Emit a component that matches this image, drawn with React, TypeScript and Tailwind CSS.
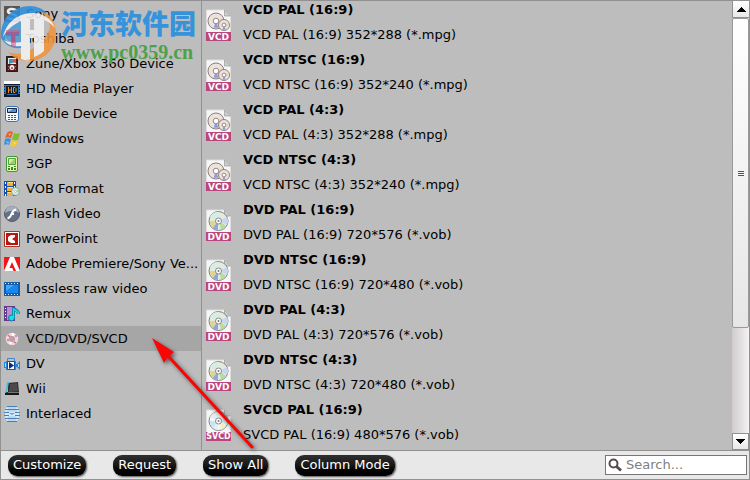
import type { ReactNode } from "react";

interface Category {
  label: string;
  icon: ReactNode;
}

interface Profile {
  kind: "VCD" | "DVD" | "SVCD";
  title: string;
  detail: string;
}

const categories: readonly Category[] = [
  { label: "Sony", icon: <SonyIcon /> },
  { label: "Toshiba", icon: <ToshibaIcon /> },
  { label: "Zune/Xbox 360 Device", icon: <ZuneIcon /> },
  { label: "HD Media Player", icon: <HdIcon /> },
  { label: "Mobile Device", icon: <MobileIcon /> },
  { label: "Windows", icon: <WindowsIcon /> },
  { label: "3GP", icon: <ThreeGpIcon /> },
  { label: "VOB Format", icon: <VobIcon /> },
  { label: "Flash Video", icon: <FlashIcon /> },
  { label: "PowerPoint", icon: <PowerPointIcon /> },
  { label: "Adobe Premiere/Sony Ve...", icon: <AdobeIcon /> },
  { label: "Lossless raw video", icon: <FilmIcon /> },
  { label: "Remux", icon: <RemuxIcon /> },
  { label: "VCD/DVD/SVCD", icon: <DiscIcon /> },
  { label: "DV", icon: <DvIcon /> },
  { label: "Wii", icon: <WiiIcon /> },
  { label: "Interlaced", icon: <InterlacedIcon /> },
];

const profiles: readonly Profile[] = [
  { kind: "VCD", title: "VCD PAL (16:9)", detail: "VCD PAL (16:9) 352*288 (*.mpg)" },
  { kind: "VCD", title: "VCD NTSC (16:9)", detail: "VCD NTSC (16:9) 352*240 (*.mpg)" },
  { kind: "VCD", title: "VCD PAL (4:3)", detail: "VCD PAL (4:3) 352*288 (*.mpg)" },
  { kind: "VCD", title: "VCD NTSC (4:3)", detail: "VCD NTSC (4:3) 352*240 (*.mpg)" },
  { kind: "DVD", title: "DVD PAL (16:9)", detail: "DVD PAL (16:9) 720*576 (*.vob)" },
  { kind: "DVD", title: "DVD NTSC (16:9)", detail: "DVD NTSC (16:9) 720*480 (*.vob)" },
  { kind: "DVD", title: "DVD PAL (4:3)", detail: "DVD PAL (4:3) 720*576 (*.vob)" },
  { kind: "DVD", title: "DVD NTSC (4:3)", detail: "DVD NTSC (4:3) 720*480 (*.vob)" },
  { kind: "SVCD", title: "SVCD PAL (16:9)", detail: "SVCD PAL (16:9) 480*576 (*.vob)" },
];

const selectedCategory = "VCD/DVD/SVCD";

export default function App() {
  return (
    <main className="relative flex h-screen flex-col overflow-hidden border border-[#919191] bg-[#bdbdbd] font-['Verdana','DejaVu_Sans',sans-serif] text-[13px] text-black">
      <div className="flex min-h-0 flex-1">
        <CategoryList />
        <ProfileList />
        <Scrollbar />
      </div>
      <Toolbar />
      <Watermark />
      <Pointer />
    </main>
  );
}

function CategoryList() {
  return (
    <nav
      aria-label="Format categories"
      className="w-[201px] shrink-0 overflow-hidden border-r border-[#919191]"
    >
      {categories.map(({ label, icon }) => (
        <button
          aria-current={label === selectedCategory}
          className={`flex h-[25px] w-full items-center gap-1.5 pl-[3px] text-left whitespace-nowrap ${
            label === selectedCategory ? "bg-[#a6a6a6]" : ""
          }`}
          key={label}
          type="button"
        >
          {icon}
          <span>{label}</span>
        </button>
      ))}
    </nav>
  );
}

function ProfileList() {
  return (
    <ul className="min-w-0 flex-1 overflow-hidden pl-1">
      {profiles.map((profile) => (
        <li className="-mt-1 mb-1 flex h-[50px] gap-3" key={profile.title}>
          <div className="pt-3">
            <ProfileIcon kind={profile.kind} />
          </div>
          <div className="leading-[25px]">
            <div className="font-bold">{profile.title}</div>
            <div>{profile.detail}</div>
          </div>
        </li>
      ))}
    </ul>
  );
}

function Scrollbar() {
  return (
    <div className="flex w-[17px] shrink-0 flex-col bg-linear-to-r from-[#d0cccd] to-[#f4f2f3]">
      <button
        aria-label="Scroll up"
        className="flex h-[17px] shrink-0 items-center justify-center border-b border-l border-[#919191] bg-linear-to-b from-white to-[#e8e8e8]"
        type="button"
      >
        <svg width="9" height="5" viewBox="0 0 9 5" shapeRendering="crispEdges">
          <path d="M4 0h1v1h1v1h1v1h1v1h1v1H0V4h1V3h1V2h1V1h1z" />
        </svg>
      </button>
      <div className="flex h-[310px] items-center justify-center rounded-xs border border-[#999] bg-linear-to-b from-white to-[#e6e6e6]">
        <div className="flex w-1.5 flex-col gap-px">
          <span className="h-px bg-[#555]" />
          <span className="h-px bg-[#555]" />
          <span className="h-px bg-[#555]" />
        </div>
      </div>
      <button
        aria-label="Scroll down"
        className="mt-auto flex h-[17px] shrink-0 items-center justify-center border border-[#919191] bg-linear-to-b from-white to-[#e8e8e8]"
        type="button"
      >
        <svg width="9" height="5" viewBox="0 0 9 5" shapeRendering="crispEdges">
          <path d="M0 0h9v1H8v1H7v1H6v1H5v1H4V4H3V3H2V2H1V1H0z" />
        </svg>
      </button>
    </div>
  );
}

function Toolbar() {
  return (
    <footer className="flex h-[29px] shrink-0 items-center justify-between border-t border-[#919191] bg-[#e8e8e8] pr-0.5 pl-[7px]">
      <div className="flex gap-[27px]">
        <ToolbarButton>Customize</ToolbarButton>
        <ToolbarButton>Request</ToolbarButton>
        <ToolbarButton>Show All</ToolbarButton>
        <ToolbarButton>Column Mode</ToolbarButton>
      </div>
      <label className="flex h-5 w-[142px] items-center gap-1 border border-[#777] bg-white px-0.5">
        <svg className="shrink-0" width="14" height="14" viewBox="0 0 14 14" fill="none" stroke="#584a4c">
          <circle cx="5.500" cy="5.500" r="4" strokeWidth="2" />
          <path d="M8.500 8.500l4.500 4" strokeWidth="3" />
        </svg>
        <input
          aria-label="Search"
          className="w-full min-w-0 bg-transparent outline-none placeholder:text-[#808080]"
          placeholder="Search..."
          type="text"
        />
      </label>
    </footer>
  );
}

function ToolbarButton({ children }: { children: string }) {
  return (
    <button
      className="h-[21px] rounded-[9px] bg-linear-to-b from-[#303030] via-[#171717] to-black px-[5px] leading-5 whitespace-nowrap text-white shadow-[1px_1px_2px_#555]"
      type="button"
    >
      {children}
    </button>
  );
}

// Site mark laid over the first rows of the category list
function Watermark() {
  return (
    <div aria-hidden="true" className="pointer-events-none absolute top-1 left-0 flex gap-1">
      <svg width="56" height="58" viewBox="0 0 56 58" opacity="0.88">
        <path d="M38 4c11 4 17 13 17 24 0 16-12 28-27 28-9 0-16-3-21-9 8 3 17 2 24-3 10-6 17-14 18-23-2-7-6-12-11-17z" fill="#f0953c" />
        <path d="M0 33C-1 15 11 1 29 1c7 0 13 3 17 7-9-2-18 0-24 6C12 18 5 25 4 34c5 5 10 6 16 6v3C11 44 4 40 0 33z" fill="#2d8fdc" />
        <path d="M4 33c2-8 8-14 17-18v23c-7 1-13-1-17-5z" fill="#2d8fdc" opacity=".75" />
        <path d="M2 32C5 17 18 8 31 8c11 0 20 6 23 15-6-7-13-10-22-9C19 14 8 21 2 32z" fill="#f3f3f3" />
        <path d="M20 15l9-2v12h4V12l10 3v31c-3 3-7 5-10 6V33h-4v22c-3 1-6 0-9-1V41C13 42 6 40 3 35c5 3 11 3 17 2z" fill="#f3f3f3" />
        <path d="M5 25h14v4h-4v13h-5V29H5z" fill="#d9446a" opacity="0.5" />
      </svg>
      <div className="font-bold">
        <div className="font-['Noto_Sans_CJK_SC',sans-serif] text-[27px] leading-9 font-black text-[#3693da]">
          河东软件园
        </div>
        <div className="font-['Liberation_Serif',serif] text-[20px] leading-[22px] text-[#4fa04a]">
          www.pc0359.cn
        </div>
      </div>
    </div>
  );
}

function Pointer() {
  return (
    <svg
      aria-hidden="true"
      className="pointer-events-none absolute top-[330px] left-[145px] drop-shadow-[2px_2px_2px_#555]"
      width="115"
      height="125"
      viewBox="0 0 115 125"
    >
      <path d="M23 26L106 116" stroke="#fa0505" strokeWidth="3" strokeLinecap="round" />
      <path d="M6 7l22 14-5 4-2 2-3 5z" fill="#fa0505" />
    </svg>
  );
}

function ProfileIcon({ kind }: { kind: Profile["kind"] }) {
  return (
    <svg width="25" height="32" viewBox="0 0 25 32">
      <path d="M.5 1h18l6 6v24H.5z" fill="#f6f6f6" stroke="#ddd" />
      <path d="M18.500 1v6h6z" fill="#ccc" stroke="#999" strokeWidth=".7" />
      {kind === "VCD" ? (
        <>
          <SmallDisc cx={10} cy={12} r={8} />
          <SmallDisc cx={18} cy={16} r={5.500} />
        </>
      ) : (
        <>
          <circle cx="12.500" cy="12" r="9.500" fill={kind === "DVD" ? "#e3ebdf" : "#f4f7f5"} stroke="#7a8583" />
          <path d="M12 12L4 8a9 9 0 0 1 8-5z" fill={kind === "DVD" ? "#d4eee4" : "#e6edee"} />
          <path d="M13 12l8-4a9 9 0 0 1 0 8z" fill={kind === "DVD" ? "#c9d6f2" : "#d6efe4"} />
          <path d="M12 12l-8 0a9 9 0 0 0 3 7z" fill={kind === "DVD" ? "#e1d58c" : "#c7e5ef"} />
          <path d="M12 12l-5 7a9 9 0 0 0 5 2z" fill={kind === "DVD" ? "#8fa6dc" : "#dfeff4"} />
          <path d="M13 12l2 9a9 9 0 0 0 5-4z" fill={kind === "DVD" ? "#badb9b" : "#f3eccd"} />
          <circle cx="12.500" cy="12" r="3" fill="#fff" stroke="#888" />
          <circle cx="12.500" cy="12" r="1" fill="#777" />
        </>
      )}
      <rect y="23" width="25" height="9" fill="#b9447e" />
      <text
        x="12.500"
        y={kind === "SVCD" ? 30 : 31}
        fill="#fff"
        fontFamily="DejaVu Sans"
        fontSize={kind === "SVCD" ? 8 : 9}
        fontWeight={700}
        textAnchor="middle"
      >
        {kind}
      </text>
    </svg>
  );
}

function SmallDisc({ cx, cy, r }: { cx: number; cy: number; r: number }) {
  return (
    <g>
      <circle cx={cx} cy={cy} r={r} fill="#eee2dd" stroke="#8d8180" />
      <path d={`M${cx} ${cy}l-${r * 0.3} ${r * 0.85} ${r * 0.6} 0z`} fill="#8e9ae0" />
      <path d={`M${cx} ${cy}l${r * 0.8}-${r * 0.4}v${r * 0.8}z`} fill="#eadbb5" />
      <circle cx={cx} cy={cy} r={r * 0.35} fill="#fff" stroke="#988" />
    </g>
  );
}

function Icon({ children }: { children: ReactNode }) {
  return (
    <svg aria-hidden="true" className="shrink-0" width="16" height="16" viewBox="0 0 16 16">
      {children}
    </svg>
  );
}

function SonyIcon() {
  return (
    <Icon>
      <path d="M0 0h16v16H0z" fill="#555" />
      <path d="M13 4.500C9 2 4 2.500 4 5.500s8 2 8 5-5 3.500-9 1" fill="none" stroke="#eee" strokeWidth="2.500" />
    </Icon>
  );
}

function ToshibaIcon() {
  return (
    <Icon>
      <path d="M2 1h13v4h-4v10H7V5H2z" fill="#d64c71" />
    </Icon>
  );
}

function ZuneIcon() {
  return (
    <Icon>
      <path d="M2.500.5h11v15h-11z" fill="#551b1d" stroke="#26191a" />
      <path d="M4 2h8v6H4z" fill="#d8eef2" />
      <path d="M5 3h6v3L5 8z" fill="#319bc2" />
      <path d="M9 3h3v4L8 6z" fill="#e65640" />
      <circle cx="8" cy="11.500" r="2.500" fill="#eee" />
      <path d="M7 11h2v2H7zM4 10h1v1H4zM11 10h1v1h-1zM4 13h1v1H4zM11 13h1v1h-1z" fill="#b66" />
    </Icon>
  );
}

function HdIcon() {
  return (
    <Icon>
      <path d="M0 0h16v4H0z" fill="#fff" />
      <path d="M0 3h16v13H0z" fill="#101b2d" />
      <path d="M0 4h2v9H0zM14 4h2v9h-2zM2 4h12v1H2z" fill="#287cca" />
      <path d="M0 5h1v1H0zM0 8h1v1H0zM0 11h1v1H0zM15 5h1v1h-1zM15 8h1v1h-1zM15 11h1v1h-1z" fill="#0b1730" />
      <path d="M4.500 6v6M7.500 6v6M4.500 9h3M9.500 6.500H11l1 1v3l-1 1H9.500z" fill="none" stroke="#ee8b12" />
      <path d="M3 13h10v1H3z" fill="#266cae" />
    </Icon>
  );
}

function MobileIcon() {
  return (
    <Icon>
      <rect x="1.500" y=".5" width="13" height="15" rx="2.500" fill="#f5f8fb" stroke="#3c70be" />
      <path d="M3.500 2.500h9v4h-9z" fill="#4f8fd0" stroke="#16253b" />
      <path d="M4 3h5L4 6z" fill="#a7dcff" />
      <path d="M4 9h2v1H4zM7 9h2v1H7zM10 9h2v1h-2zM4 11h2v1H4zM7 11h2v1H7zM10 11h2v1h-2zM4 13h2v1H4zM7 13h2v1H7zM10 13h2v1h-2z" fill="#555" />
    </Icon>
  );
}

function WindowsIcon() {
  return (
    <Icon>
      <path d="M3 2c2-2 4-2 6-1L7 7C5 6 3 6 1 7z" fill="#e9602a" />
      <path d="M10 2c2 1 4 1 6 0l-2 7c-2 1-4 1-6-1z" fill="#7fbd31" />
      <path d="M1 8c2-1 4-1 6 0l-2 6c-2-1-3-1-5 0z" fill="#3b91df" />
      <path d="M8 9c2 1 4 1 6 0l-2 6c-2 1-4 1-6-1z" fill="#f6c733" />
      <path d="M4 3l3-1-1 3zM2 10l3 1-1 2zM10 11l2 1-2 1z" fill="#fff" opacity=".45" />
    </Icon>
  );
}

function ThreeGpIcon() {
  return (
    <Icon>
      <rect x="2.500" y=".5" width="11" height="15" rx="1.500" fill="#e7f9a7" stroke="#3e9636" />
      <path d="M4.500 2.500h7v6h-7z" fill="#9bcf74" stroke="#58a342" />
      <path d="M5 3h5L5 8z" fill="#d9ef9a" />
      <path d="M4 10h2v1H4zM10 10h2v1h-2zM4 12h2v2H4zM7 11h2v3H7zM10 12h2v2h-2z" fill="#378a31" />
    </Icon>
  );
}

function VobIcon() {
  return (
    <Icon>
      <path d="M0 0h12v15H0z" fill="#174da7" />
      <path d="M3 1h6v4H3zM3 6h6v4H3zM3 11h6v4H3z" fill="#f3b12d" />
      <path d="M4 1h5v1H4zM4 6h5v1H4zM4 11h5v1H4z" fill="#ffe28c" />
      <path d="M1 1h1v2H1zM1 5h1v2H1zM1 9h1v2H1zM1 13h1v2H1zM10 1h1v2h-1zM10 5h1v2h-1z" fill="#fff" />
      <circle cx="11.500" cy="10.500" r="4" fill="#d9eadf" stroke="#7c96a7" strokeWidth=".8" />
      <path d="M12 10l3-2v4z" fill="#a3d989" />
      <circle cx="11.500" cy="10.500" r="1" fill="#fff" stroke="#89a" strokeWidth=".5" />
    </Icon>
  );
}

function FlashIcon() {
  return (
    <Icon>
      <circle cx="8" cy="8" r="7.500" fill="#657087" stroke="#555b68" />
      <path d="M1 7a7 7 0 0 1 14 0c-4-3-9-3-14 0z" fill="#a5adbb" />
      <path d="M12 3.500C9 4 8.500 6 7.500 8c-1 3-2 4-4 4.500M7.500 8H10" fill="none" stroke="#fff" strokeWidth="2" />
    </Icon>
  );
}

function PowerPointIcon() {
  return (
    <Icon>
      <path d="M.5.5h15v15H.5z" fill="#fff" stroke="#a9372c" />
      <path d="M2 2h12v12H2z" fill="#bb1711" />
      <path d="M11 4H7L4 6v4l3 2h4v-2L8 8l3-2z" fill="#fff" />
    </Icon>
  );
}

function AdobeIcon() {
  return (
    <Icon>
      <path d="M0 1h16v14H0z" fill="#fff" />
      <path d="M0 1h6L0 15zM10 1h6v14zM8 6l4 9H9.500l-1.200-3H5.500z" fill="#f11419" />
    </Icon>
  );
}

function FilmIcon() {
  return (
    <Icon>
      <path d="M0 1h16v14H0z" fill="#155ba6" />
      <path d="M2 4h12v8H2z" fill="#1587ee" />
      <path d="M2 4h8l-8 6z" fill="#45a6fa" />
      <path d="M1 2h1v1H1zM4 2h1v1H4zM7 2h1v1H7zM10 2h1v1h-1zM13 2h1v1h-1zM1 13h1v1H1zM4 13h1v1H4zM7 13h1v1H7zM10 13h1v1h-1zM13 13h1v1h-1z" fill="#e0f2ff" />
    </Icon>
  );
}

function RemuxIcon() {
  return (
    <Icon>
      <path d="M0 0h11v15H0z" fill="#65398c" />
      <path d="M3 1h6v13H3z" fill="#b78dd6" />
      <path d="M1 2h1v1H1zM1 5h1v1H1zM1 8h1v1H1zM1 11h1v1H1z" fill="#fff" />
      <path d="M9.500 1v11M9.500 2c1 2 5 2 5 6" fill="none" stroke="#087a98" strokeWidth="3" />
      <circle cx="7.500" cy="12" r="3" fill="#1ddbe5" stroke="#087a98" />
      <path d="M9.500 2v10M9.500 2.500c1 2 5 2 5 5.500" fill="none" stroke="#1ddbe5" strokeWidth="1.500" />
    </Icon>
  );
}

function DiscIcon() {
  return (
    <Icon>
      <circle cx="8" cy="8" r="4.500" fill="none" stroke="#efd6dd" strokeWidth="3.500" />
      <path d="M4 4l2 2M10 11l2 1M3 9l2 0" stroke="#e06f8c" strokeWidth="1.500" />
      <path d="M9 2l0 3M6 13l1-2" stroke="#fff" strokeWidth="2" />
      <path d="M11 5l2 0" stroke="#bf93be" strokeWidth="2" />
      <circle cx="8" cy="8" r="2.500" fill="#aaa" stroke="#c88b98" strokeWidth=".7" />
    </Icon>
  );
}

function DvIcon() {
  return (
    <Icon>
      <path d="M3.500 5V2.500h7V5" fill="none" stroke="#4389ce" />
      <path d="M0 6h2V5h10v3h1l3-3v9l-3-3h-1v3H2v-2H0z" fill="#2881d6" />
      <path d="M3.500 5.500h7v8h-7z" fill="#fff" stroke="#1556a0" />
      <path d="M5 6l5 3.500L5 13z" fill="#092a7a" />
      <path d="M14.500 8v3M1.500 7v4" stroke="#b5ddff" />
    </Icon>
  );
}

function WiiIcon() {
  return (
    <Icon>
      <path d="M4 2l10-1 1 10-11 1z" fill="#2f2f2f" />
      <path d="M6 3l7-1 1 8-9 1z" fill="#4a4a4a" />
      <path d="M3 1l2 0-2 11-2 1z" fill="#4fbbdc" />
      <path d="M1 12l3-1h11v3H1z" fill="#171717" />
      <path d="M4 11.500h11" stroke="#777" />
    </Icon>
  );
}

function InterlacedIcon() {
  return (
    <Icon>
      <rect x="1" y="1" width="14" height="14" rx="4" fill="#d7e9f8" />
      <path d="M3 .5h10M1 3.500h14M3 15.500h10M1 12.500h14" stroke="#477fb9" />
      <path d="M0 6.500h5M11 6.500h5M0 9.500h5M11 9.500h5" stroke="#477fb9" />
      <path d="M4 2h8M3 5h10M4 11h8M4 14h8" stroke="#9cc6e8" />
      <path d="M5 7l3 2 3-2z" fill="#6e9fce" />
    </Icon>
  );
}
